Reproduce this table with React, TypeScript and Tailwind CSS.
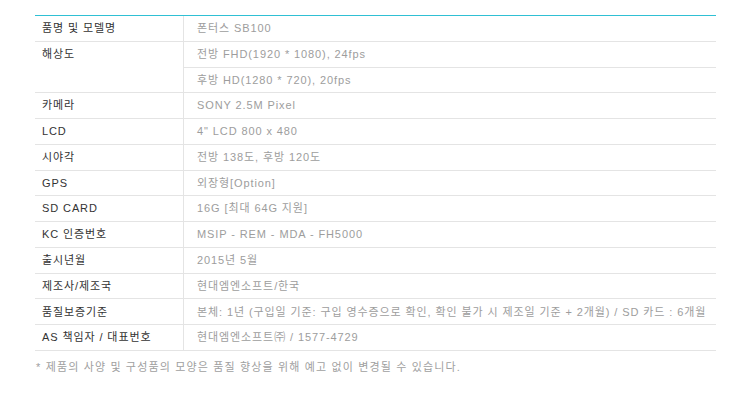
import React from "react";

const font = { fontFamily: '"Liberation Sans", "Noto Sans CJK KR", sans-serif' };

type Row = { label: string; values: string[] };

const rows: Row[] = [
  { label: "품명 및 모델명", values: ["폰터스 SB100"] },
  { label: "해상도", values: ["전방 FHD(1920 * 1080), 24fps", "후방 HD(1280 * 720), 20fps"] },
  { label: "카메라", values: ["SONY 2.5M Pixel"] },
  { label: "LCD", values: ["4\" LCD 800 x 480"] },
  { label: "시야각", values: ["전방 138도, 후방 120도"] },
  { label: "GPS", values: ["외장형[Option]"] },
  { label: "SD CARD", values: ["16G [최대 64G 지원]"] },
  { label: "KC 인증번호", values: ["MSIP - REM - MDA - FH5000"] },
  { label: "출시년월", values: ["2015년 5월"] },
  { label: "제조사/제조국", values: ["현대엠엔소프트/한국"] },
  {
    label: "품질보증기준",
    values: ["본체: 1년 (구입일 기준: 구입 영수증으로 확인, 확인 불가 시 제조일 기준 + 2개월) / SD 카드 : 6개월"],
  },
  { label: "AS 책임자 / 대표번호", values: ["현대엠엔소프트㈜ / 1577-4729"] },
];

export default function App() {
  return (
    <div className="w-[750px] h-[404px] bg-white overflow-hidden" style={font}>
      <div className="ml-[35px] pt-[15px] w-[681px]">
        <div className="h-px bg-[#2fc0d4]" />
        <div>
          {rows.map((r) => (
            <div key={r.label} className="flex border-b border-solid border-b-[#e4e4e4]">
              <div className="w-[148px] shrink-0 pl-[7px] text-[11px] text-[#333333] tracking-[0.9px]">
                <div className="h-[24.77px] flex items-center">{r.label}</div>
              </div>
              <div className="flex-1 border-l border-solid border-l-[#e4e4e4] flex flex-col">
                {r.values.map((v, i) => (
                  <div
                    key={i}
                    className={
                      "flex items-center pl-[13px] text-[11px] text-[#9d9d9d] tracking-[0.9px] whitespace-nowrap " +
                      (i < r.values.length - 1
                        ? "border-b border-solid border-b-[#e4e4e4] h-[25.77px]"
                        : "h-[24.77px]")
                    }
                  >
                    {v}
                  </div>
                ))}
              </div>
            </div>
          ))}
        </div>
        <div className="pt-[8px] pl-[1px] text-[11px] leading-[16px] text-[#a0a0a0] tracking-[1.15px]">
          * 제품의 사양 및 구성품의 모양은 품질 향상을 위해 예고 없이 변경될 수 있습니다.
        </div>
      </div>
    </div>
  );
}
